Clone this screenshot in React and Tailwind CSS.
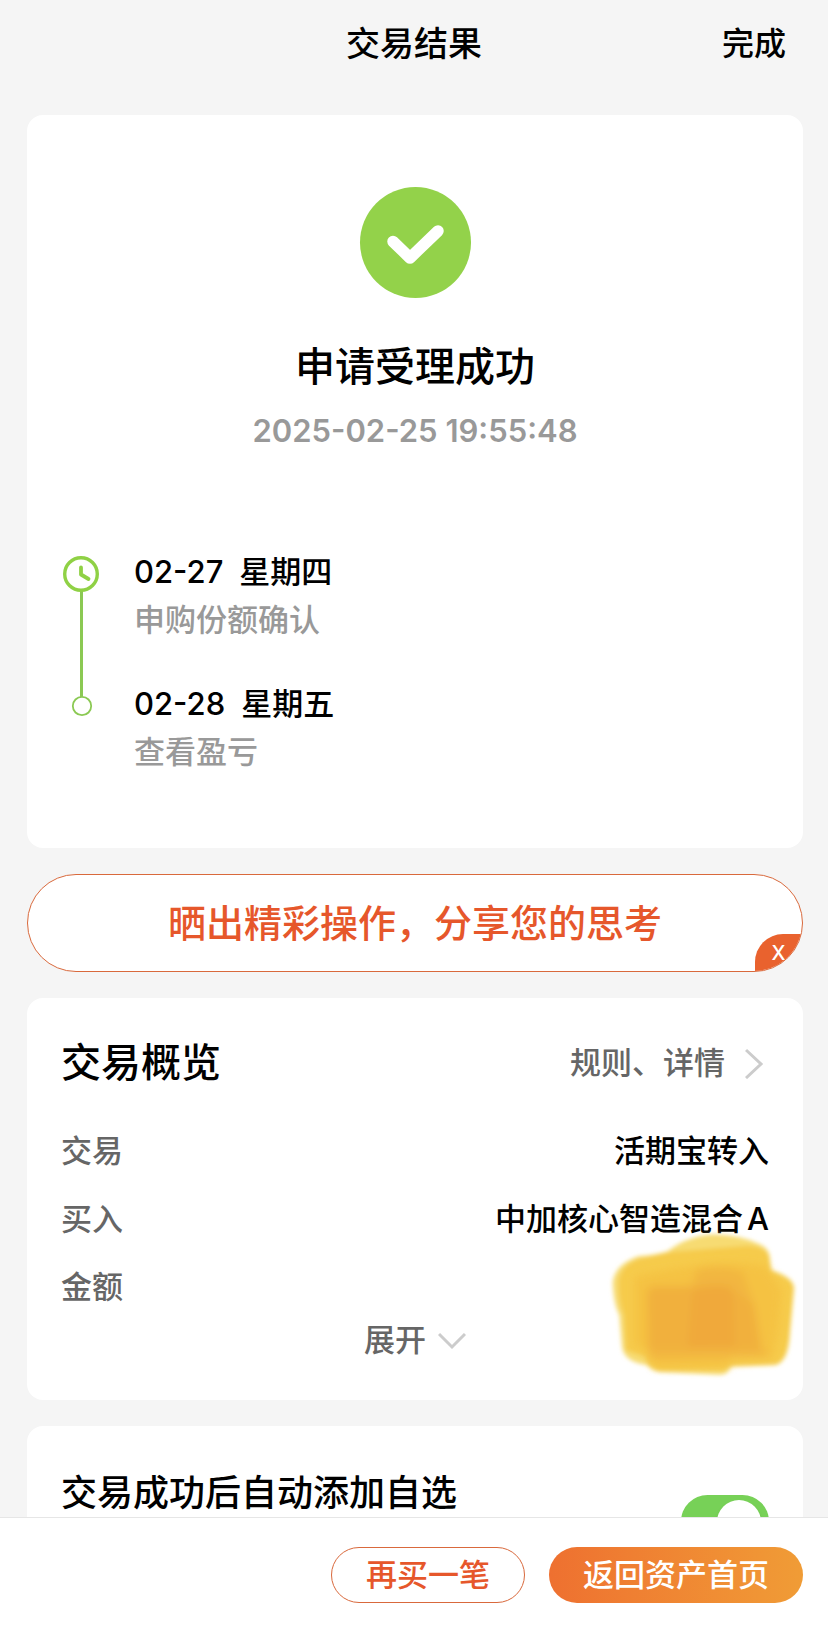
import { useState } from "react";

const schedule = [
  { date: "02-27", weekday: "星期四", note: "申购份额确认" },
  { date: "02-28", weekday: "星期五", note: "查看盈亏" },
];

const details = [
  { label: "交易", value: "活期宝转入" },
  { label: "买入", value: "中加核心智造混合", share: "A" },
  { label: "金额", value: "" },
];

function SuccessIcon() {
  return (
    <svg className="size-28" viewBox="0 0 112 112" aria-hidden="true">
      <circle cx="56.500" cy="55.500" r="55.5" fill="#93d24a" />
      <path d="M34 54.5 51 71 79 44" fill="none" stroke="#fff" strokeWidth="11.500" strokeLinecap="round" strokeLinejoin="round" />
    </svg>
  );
}

function TimelineMark() {
  return (
    <svg className="h-[164px] w-9 shrink-0" viewBox="0 0 36 164" fill="none" aria-hidden="true">
      <path d="M18.500 35V142" stroke="#8bc953" strokeWidth="3" />
      <circle cx="18" cy="18" r="16.300" stroke="#8fd145" strokeWidth="3.400" />
      <path d="M18 11.500V18.500l7.500 4.500" stroke="#8fd145" strokeWidth="3.800" strokeLinecap="round" strokeLinejoin="round" />
      <circle cx="19" cy="150" r="9.200" fill="#fff" stroke="#8bc953" strokeWidth="1.800" />
    </svg>
  );
}

function Marker() {
  return (
    <svg
      className="pointer-events-none absolute right-0 bottom-5 h-[153px] w-[197px]"
      viewBox="140 110 591 459"
      aria-hidden="true"
    >
      <defs>
        <filter id="soft" x="-10%" y="-10%" width="120%" height="120%">
          <feGaussianBlur stdDeviation="6" />
        </filter>
        <filter id="softer" x="-10%" y="-10%" width="120%" height="120%">
          <feGaussianBlur stdDeviation="12" />
        </filter>
      </defs>
      <g filter="url(#soft)">
        <path
          d="M160 275Q168 220 240 197Q285 195 325 183Q385 136 465 132Q545 134 605 163Q632 178 632 205L636 240Q700 258 705 292L692 430Q688 515 648 525L515 530Q505 554 480 553L300 545Q275 540 262 524Q195 515 188 470L180 375Q162 340 160 275Z"
          fill="#f7db72"
        />
        <path
          d="M178 270Q185 225 240 205L340 184L560 166Q626 168 630 205L632 244Q698 262 702 292L690 430Q684 510 648 522L510 526Q500 540 480 540L300 540Q262 530 258 500L200 480L194 375Q176 330 178 270Z"
          fill="#f6cb4b"
        />
      </g>
      <g filter="url(#softer)">
        <path
          d="M225 260Q300 240 400 228Q490 205 620 228L668 300L655 430L640 495L515 500L510 528L290 530L262 480L225 465Z"
          fill="#f5c242"
        />
        <path d="M410 240Q480 222 550 245L580 330L606 475L640 500L270 505L262 300L400 285Z" fill="#f2b640" />
        <path d="M264 305Q268 288 290 288L500 290L585 340L606 476L266 478Z" fill="#f1b03e" />
        <path d="M400 300Q490 270 522 300L526 470L385 472Z" fill="#f0a83b" opacity="0.9" />
      </g>
    </svg>
  );
}

export default function App() {
  const [autoAdd, setAutoAdd] = useState(true);

  return (
    <div className="flex h-screen flex-col bg-neutral-100 font-['Inter','Noto_Sans_CJK_SC',sans-serif] text-[31px] leading-[48px] font-medium text-black">
      <header className="grid shrink-0 grid-cols-[1fr_auto_1fr] items-center px-[42px] pt-5 pb-[47px]">
        <h1 className="col-start-2 text-[34px] font-medium">交易结果</h1>
        <button type="button" className="justify-self-end text-[32px] font-medium">完成</button>
      </header>

      <main className="flex min-h-0 flex-1 flex-col gap-[26px] overflow-y-auto pr-[25px] pl-[27px] [scrollbar-width:none]">
        <section className="shrink-0 rounded-2xl bg-white px-9 py-[72px]">
          <div className="flex flex-col items-center">
            <SuccessIcon />
            <h2 className="mt-11 text-[40px] font-medium">申请受理成功</h2>
            <time className="mt-4 font-semibold text-[#999]" dateTime="2025-02-25T19:55:48">
              2025-02-25 19:55:48
            </time>
          </div>
          <div className="mt-[93px] flex gap-[35px]">
            <div className="pt-2">
              <TimelineMark />
            </div>
            <ol className="flex flex-col gap-9">
              {schedule.map((step) => (
                <li key={step.date}>
                  <p className="flex gap-4">
                    <span>{step.date}</span>
                    <span>{step.weekday}</span>
                  </p>
                  <p className="text-[#999]">{step.note}</p>
                </li>
              ))}
            </ol>
          </div>
        </section>

        <div className="relative shrink-0 overflow-hidden rounded-[49px] border border-[#d9693c] bg-white">
          <button type="button" className="block w-full py-6 text-[38px] font-medium text-[#e6572b]">
            晒出精彩操作，分享您的思考
          </button>
          <button
            type="button"
            aria-label="关闭"
            className="absolute right-0 bottom-0 flex h-[37px] w-[47px] items-center justify-center rounded-tl-[28px] bg-[#e9622e] text-xl leading-6 font-medium text-white"
          >
            X
          </button>
        </div>

        <section className="relative shrink-0 rounded-2xl bg-white px-[34px] pt-[41px] pb-9">
          <div className="flex items-center justify-between">
            <h2 className="text-[40px] font-medium">交易概览</h2>
            <a href="#details" className="flex items-center gap-5 pr-1 text-[#666]">
              规则、详情
              <svg className="h-8 w-5" viewBox="0 0 20 32" fill="none" aria-hidden="true">
                <path d="M1 3 16 17 1 31" stroke="#ccc" strokeWidth="3" />
              </svg>
            </a>
          </div>
          <dl id="details" className="mt-10 flex flex-col gap-5">
            {details.map((row) => (
              <div key={row.label} className="flex justify-between">
                <dt className="text-[#666]">{row.label}</dt>
                <dd className="flex gap-1">
                  {row.value}
                  {row.share && <span>{row.share}</span>}
                </dd>
              </div>
            ))}
          </dl>
          <button type="button" className="mx-auto mt-[5px] flex items-center gap-3 text-[#666]">
            展开
            <svg className="h-5 w-7" viewBox="0 0 28 20" fill="none" aria-hidden="true">
              <path d="M1 4 14 17 27 4" stroke="#ccc" strokeWidth="3" />
            </svg>
          </button>
          <Marker />
        </section>

        <section className="shrink-0 rounded-2xl bg-white px-[34px] pt-[43px] pb-9">
          <label className="flex items-start justify-between text-[36px]">
            交易成功后自动添加自选
            <input
              type="checkbox"
              role="switch"
              checked={autoAdd}
              onChange={(event) => setAutoAdd(event.target.checked)}
              className="mt-[26px] flex h-[53px] w-[88px] shrink-0 cursor-pointer appearance-none items-center rounded-full bg-[#ccc] px-2 before:size-11 before:rounded-full before:bg-white before:shadow-md checked:justify-end checked:bg-[#77d157]"
            />
          </label>
        </section>
      </main>

      <footer className="flex shrink-0 justify-end gap-6 border-t border-[#e6e6e6] bg-white pt-[29px] pr-[25px] pb-[39px] pl-[27px]">
        <button type="button" className="flex h-14 items-center rounded-full border border-[#d9693c] px-[34px] font-medium text-[#e6572b]">
          再买一笔
        </button>
        <button
          type="button"
          className="flex h-14 items-center rounded-full bg-linear-to-r from-[#ee7030] to-[#f09c36] px-[34px] font-medium text-white"
        >
          返回资产首页
        </button>
      </footer>
    </div>
  );
}
